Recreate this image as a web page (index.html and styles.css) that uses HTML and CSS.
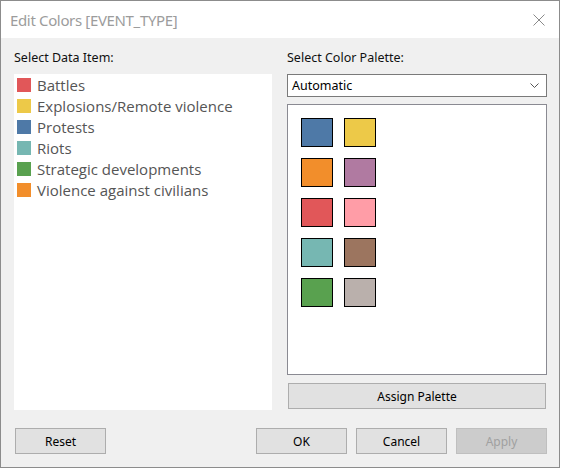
FILE: index.html
```html
<!DOCTYPE html>
<html>
<head>
<meta charset="utf-8">
<link rel="stylesheet" href="styles.css">
</head>
<body>
<div class="window">
  <div class="titlebar">
    <span class="title">Edit Colors [EVENT_TYPE]</span>
    <svg class="close" width="12" height="12" viewBox="0 0 12 12"><path d="M0.5 0.5 L11.5 11.5 M11.5 0.5 L0.5 11.5" stroke="#8a8a8a" stroke-width="1" fill="none"/></svg>
  </div>
  <div class="content">
    <div class="columns">
      <div class="col left">
        <div class="label">Select Data Item:</div>
        <div class="list">
          <div class="item"><span class="sw" style="background:#e15759"></span>Battles</div>
          <div class="item"><span class="sw" style="background:#edc948"></span>Explosions/Remote violence</div>
          <div class="item"><span class="sw" style="background:#4e79a7"></span>Protests</div>
          <div class="item"><span class="sw" style="background:#76b7b2"></span>Riots</div>
          <div class="item"><span class="sw" style="background:#59a14f"></span>Strategic developments</div>
          <div class="item"><span class="sw" style="background:#f28e2b"></span>Violence against civilians</div>
        </div>
      </div>
      <div class="col right">
        <div class="label">Select Color Palette:</div>
        <div class="select">
          <span>Automatic</span>
          <svg class="chev" width="9" height="5" viewBox="0 0 9 5"><path d="M0.5 0.5 L4.5 4.5 L8.5 0.5" stroke="#555" stroke-width="1" fill="none"/></svg>
        </div>
        <div class="palette">
          <span class="pc" style="background:#4e79a7"></span>
          <span class="pc" style="background:#edc948"></span>
          <span class="pc" style="background:#f28e2b"></span>
          <span class="pc" style="background:#b07aa1"></span>
          <span class="pc" style="background:#e15759"></span>
          <span class="pc" style="background:#ff9da7"></span>
          <span class="pc" style="background:#76b7b2"></span>
          <span class="pc" style="background:#9c755f"></span>
          <span class="pc" style="background:#59a14f"></span>
          <span class="pc" style="background:#bab0ac"></span>
        </div>
        <button class="btn assign">Assign Palette</button>
      </div>
    </div>
    <div class="footer">
      <button class="btn">Reset</button>
      <div class="spacer"></div>
      <button class="btn">OK</button>
      <button class="btn">Cancel</button>
      <button class="btn disabled">Apply</button>
    </div>
  </div>
</div>
</body>
</html>
```

FILE: styles.css
```css
* { box-sizing: border-box; }
html, body { margin: 0; padding: 0; }
body {
  background: #ffffff;
  width: 561px;
  height: 470px;
  overflow: hidden;
  font-family: "Noto Sans", "Open Sans", sans-serif;
}
.window {
  width: 560px;
  height: 468px;
  border: 1px solid #8c8c8c;
  background: #f0f0f0;
  display: flex;
  flex-direction: column;
}
.titlebar {
  height: 37px;
  background: #ffffff;
  display: flex;
  align-items: center;
  padding-left: 9px;
  padding-right: 14px;
  flex-shrink: 0;
}
.title {
  font-family: "Noto Sans", sans-serif;
  font-size: 15px;
  color: #9c9c9c;
  flex: 1;
  letter-spacing: -0.35px;
}
.close { display: block; }
.content {
  padding: 12px 11px 0 13px;
  display: flex;
  flex-direction: column;
}
.columns {
  display: flex;
  gap: 15px;
}
.col { display: flex; flex-direction: column; }
.left { width: 258px; }
.right { width: 260px; }
.label {
  font-size: 12.5px;
  line-height: 16px;
  height: 16px;
  color: #111;
  margin-bottom: 8px;
}
.list {
  background: #ffffff;
  height: 336px;
  padding-top: 0;
}
.item {
  height: 21px;
  display: flex;
  align-items: center;
  font-family: "Open Sans", sans-serif;
  font-size: 15px;
  color: #555555;
  padding-left: 3px;
}
.sw {
  width: 14px;
  height: 14px;
  margin-right: 6px;
  flex-shrink: 0;
}
.select {
  height: 23px;
  background: #fff;
  border: 1px solid #7a7a7a;
  display: flex;
  align-items: center;
  justify-content: space-between;
  padding: 0 7px 0 4px;
  font-size: 12.5px;
  color: #000;
}
.chev { display: block; }
.palette {
  margin-top: 7px;
  height: 271px;
  background: #fff;
  border: 1px solid #8a8a92;
  padding: 13px 0 0 13px;
  display: grid;
  grid-template-columns: 32px 32px;
  grid-auto-rows: 29px;
  column-gap: 11px;
  row-gap: 11px;
  align-content: start;
}
.pc { border: 1px solid #000; }
.btn {
  height: 26px;
  width: 91px;
  background: #e1e1e1;
  border: 1px solid #adadad;
  font-family: "Noto Sans", sans-serif;
  font-size: 12px;
  color: #000;
  padding: 0;
  margin: 0;
}
.assign {
  width: auto;
  margin: 8px 1px 0 1px;
}
.footer {
  display: flex;
  margin-top: 18px;
  padding-left: 1px;
  padding-right: 1px;
  gap: 9px;
}
.spacer { flex: 1; }
.disabled {
  background: #cccccc;
  border-color: #bfbfbf;
  color: #a0a0a0;
}
```
